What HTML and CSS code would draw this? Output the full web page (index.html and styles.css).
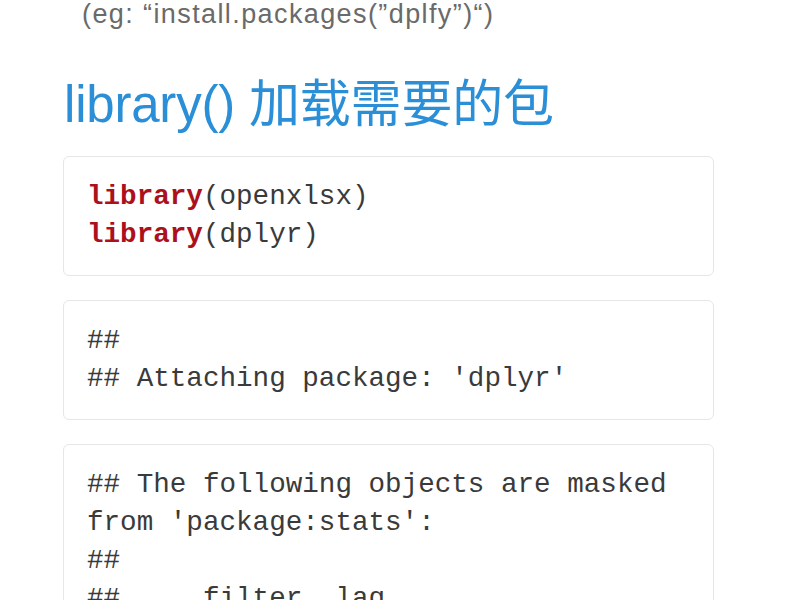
FILE: index.html
```html
<!DOCTYPE html>
<html lang="zh-CN">
<head>
<meta charset="utf-8">
<link rel="stylesheet" href="styles.css">
</head>
<body>
<main class="page">
  <p class="note">(eg: “install.packages(”dplfy”)“)</p>
  <h2 class="title">library() 加载需要的包</h2>
  <pre class="code"><span class="kw">library</span>(openxlsx)
<span class="kw">library</span>(dplyr)</pre>
  <pre class="code">##
## Attaching package: 'dplyr'</pre>
  <pre class="code">## The following objects are masked
from 'package:stats':
##
##     filter, lag</pre>
</main>
</body>
</html>
```

FILE: styles.css
```css
html, body {
  margin: 0;
  padding: 0;
  background: #ffffff;
}
.page {
  width: 651px;
  margin-left: 63px;
  display: flex;
  flex-direction: column;
}
.note {
  margin: 0 0 0 19px;
  font-family: "Liberation Sans", Arial, sans-serif;
  font-size: 27px;
  line-height: 28px;
  color: #6a6a6a;
  letter-spacing: 1.4px;
}
.title {
  margin: 48px 0 22px 1px;
  font-family: "Liberation Sans", "Noto Sans CJK SC", sans-serif;
  font-weight: normal;
  font-size: 51px;
  line-height: 58px;
  color: #2a8fd6;
  letter-spacing: -0.2px;
}
.code {
  margin: 0 0 24px 0;
  padding: 21px 23px 21px 23px;
  border: 1px solid #e6e6e6;
  border-radius: 6px;
  background: #ffffff;
  font-family: "Liberation Mono", "Courier New", monospace;
  font-size: 27.6px;
  line-height: 38px;
  color: #3a3a3a;
  white-space: pre;
}
.kw {
  color: #ab101c;
  font-weight: bold;
}
```
